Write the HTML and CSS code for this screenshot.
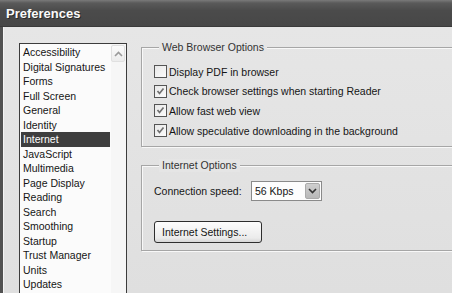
FILE: index.html
```html
<!DOCTYPE html>
<html lang="en">
<head>
  <meta charset="UTF-8" />
  <title>Preferences</title>
  <link rel="stylesheet" href="styles.css">
</head>
<body>
  <div class="window">
    <div class="titlebar">Preferences</div>

    <div class="client">
      <div class="listbox">
        <ul class="categories">
          <li>Accessibility</li>
          <li>Digital Signatures</li>
          <li>Forms</li>
          <li>Full Screen</li>
          <li>General</li>
          <li>Identity</li>
          <li class="selected">Internet</li>
          <li>JavaScript</li>
          <li>Multimedia</li>
          <li>Page Display</li>
          <li>Reading</li>
          <li>Search</li>
          <li>Smoothing</li>
          <li>Startup</li>
          <li>Trust Manager</li>
          <li>Units</li>
          <li>Updates</li>
        </ul>
        <div class="scrollbar">
          <div class="scroll-btn">
            <svg width="9" height="6" viewBox="0 0 9 6"><path d="M1 5 L4.5 1.5 L8 5" fill="none" stroke="#9a9a9a" stroke-width="1.6"/></svg>
          </div>
        </div>
      </div>

      <div class="panel">
        <div class="group web-group">
          <div class="group-title">Web Browser Options</div>
          <label class="check-row"><span class="check"></span>Display PDF in browser</label>
          <label class="check-row"><span class="check on"></span>Check browser settings when starting Reader</label>
          <label class="check-row"><span class="check on"></span>Allow fast web view</label>
          <label class="check-row"><span class="check on"></span>Allow speculative downloading in the background</label>
        </div>

        <div class="group net-group">
          <div class="group-title">Internet Options</div>
          <div class="speed-row">
            <span class="speed-label">Connection speed:</span>
            <div class="combo">
              <span class="combo-value">56 Kbps</span>
              <span class="combo-btn">
                <svg width="9" height="6" viewBox="0 0 9 6"><path d="M1 1 L4.5 4.5 L8 1" fill="none" stroke="#333" stroke-width="1.6"/></svg>
              </span>
            </div>
          </div>
          <button class="push-btn">Internet Settings...</button>
        </div>
      </div>
    </div>
  </div>
</body>
</html>
```

FILE: styles.css
```css
html, body {
  margin: 0;
  padding: 0;
  background: #e2e2e2;
}

.window {
  width: 452px;
  height: 293px;
  overflow: hidden;
  font-family: "Liberation Sans", Arial, sans-serif;
  font-size: 10.5px;
  color: #151515;
  background: #e2e2e2;
}

.titlebar {
  height: 27px;
  line-height: 28px;
  padding-left: 6px;
  font-size: 13px;
  font-weight: bold;
  color: #fafafa;
  text-shadow: 1px 1px 0 #2a2a2a;
  background: linear-gradient(#7a7a7a 0, #5a5a5a 3px, #4b4b4b 40%, #474747 100%);
  border-bottom: 1px solid #3a3a3a;
  box-sizing: border-box;
}

.client {
  display: flex;
  height: 266px;
  border-left: 3px solid #525252;
  box-shadow: inset 1px 0 0 #f4f4f4;
  background: linear-gradient(#e6e6e6, #dfdfdf);
}

/* category list */
.listbox {
  flex: none;
  display: flex;
  width: 108px;
  height: 270px;
  margin: 16px 0 0 16px;
  border: 1px solid #3c3c3c;
  background: #fbfbfb;
  box-sizing: border-box;
}

.categories {
  flex: 1;
  list-style: none;
  margin: 0;
  padding: 1px;
}

.categories li {
  height: 14.5px;
  line-height: 14.5px;
  padding-left: 2px;
  white-space: nowrap;
}

.categories li.selected {
  background: #3e3e3e;
  color: #ffffff;
}

.scrollbar {
  flex: none;
  width: 15px;
  background: #f6f6f6;
}

.scroll-btn {
  display: flex;
  align-items: center;
  justify-content: center;
  height: 15px;
  margin: 1px 1px 0 0;
  border: 1px solid #e0e0e0;
  border-radius: 2px;
  background: linear-gradient(#fbfbfb, #ececec);
}

/* right side */
.panel {
  flex: none;
  width: 340px;
  margin-left: 14px;
}

.group {
  border: 1px solid #a6a6a6;
  box-shadow: 1px 1px 0 #f8f8f8, inset 1px 1px 0 #f8f8f8;
  padding: 0 12px;
}

.web-group {
  margin-top: 20px;
  padding-bottom: 6px;
}

.net-group {
  margin-top: 18px;
  padding-bottom: 7px;
}

.group-title {
  width: fit-content;
  margin: -7px 0 0 5px;
  padding: 0 3px;
  height: 13px;
  line-height: 13px;
  color: #333;
  background: #e5e5e5;
}

.check-row {
  display: flex;
  align-items: center;
  height: 19.6px;
  white-space: nowrap;
}

.web-group .check-row:first-of-type {
  margin-top: 8px;
}

.check {
  flex: none;
  width: 13px;
  height: 13px;
  margin-right: 2px;
  border: 1px solid #555;
  box-sizing: border-box;
  background: linear-gradient(135deg, #e8e8e8, #fbfbfb);
}

.check.on {
  background-image: url("data:image/svg+xml,%3Csvg xmlns='http://www.w3.org/2000/svg' width='11' height='11'%3E%3Cpath d='M2.5 5 L4.5 7.5 L8.5 2.5' fill='none' stroke='%23707070' stroke-width='1.7'/%3E%3C/svg%3E"), linear-gradient(135deg, #e8e8e8, #fbfbfb);
  background-repeat: no-repeat;
}

.speed-row {
  display: flex;
  align-items: center;
  margin-top: 9px;
  height: 20px;
}

.speed-label {
  width: 97px;
}

.combo {
  display: flex;
  align-items: center;
  width: 71px;
  height: 20px;
  border: 1px solid #8a8a8a;
  box-sizing: border-box;
  background: #fdfdfd;
}

.combo-value {
  flex: 1;
  padding-left: 3px;
}

.combo-btn {
  display: flex;
  align-items: center;
  justify-content: center;
  width: 15px;
  height: 16px;
  margin-right: 1px;
  border: 1px solid #aaa;
  border-radius: 2px;
  box-sizing: border-box;
  background: linear-gradient(#cfcfcf, #b8b8b8);
}

.push-btn {
  display: block;
  margin-top: 20px;
  width: 108px;
  height: 22px;
  padding: 0 0 0 7px;
  text-align: left;
  font: inherit;
  color: #151515;
  border: 1px solid #2e2e2e;
  border-radius: 3px;
  background: linear-gradient(#fdfdfd, #ebebeb 80%, #d6d6d6);
}
```
